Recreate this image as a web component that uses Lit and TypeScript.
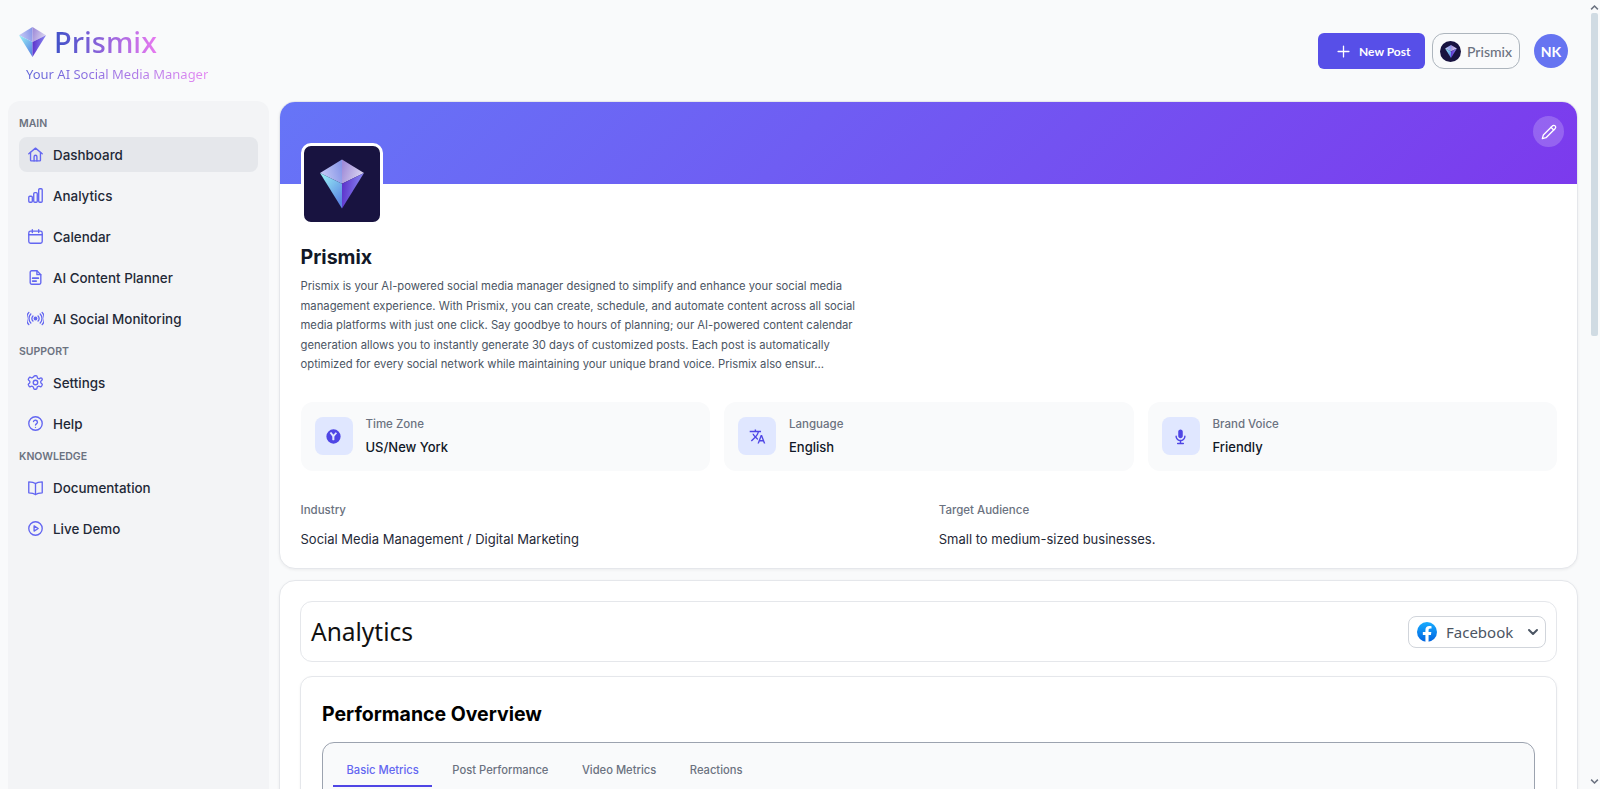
import { LitElement, css, html, svg } from 'lit'
import { customElement } from 'lit/decorators.js'

const gem = (id: string) => html`
  <svg class="gem" viewBox="0 0 129 143" aria-hidden="true">
    <defs>
      <linearGradient id="${id}-tl" x1="0" y1="0.6" x2="1" y2="0.3">
        <stop offset="0" stop-color="#c9ccf6" />
        <stop offset="1" stop-color="#8796e8" />
      </linearGradient>
      <linearGradient id="${id}-tr" x1="0" y1="0.3" x2="1" y2="0.7">
        <stop offset="0" stop-color="#a08cd8" />
        <stop offset="1" stop-color="#dfdbf3" />
      </linearGradient>
      <linearGradient id="${id}-bl" x1="0" y1="0" x2="0.7" y2="1">
        <stop offset="0" stop-color="#9cf7f6" />
        <stop offset="1" stop-color="#5b86e4" />
      </linearGradient>
      <linearGradient id="${id}-br" x1="0" y1="0.2" x2="1" y2="0.4">
        <stop offset="0" stop-color="#5b2fc9" />
        <stop offset="1" stop-color="#8a8cf5" />
      </linearGradient>
    </defs>
    <polygon points="64.5,0 0,39 64.5,71" fill="url(#${id}-tl)" />
    <polygon points="64.5,0 129,39 64.5,71" fill="url(#${id}-tr)" />
    <polygon points="0,39 64.5,71 64.5,143" fill="url(#${id}-bl)" />
    <polygon points="129,39 64.5,71 64.5,143" fill="url(#${id}-br)" />
  </svg>
`

const line = (body: ReturnType<typeof svg>) => html`
  <svg class="ico" viewBox="0 0 24 24" fill="none" stroke="currentColor" stroke-width="1.9" stroke-linecap="round" stroke-linejoin="round" aria-hidden="true">${body}</svg>
`

const navIcons: Record<string, ReturnType<typeof line>> = {
  home: line(svg`<path d="M2.500 11 12 3l9.500 8" /><path d="M5 9v11a1 1 0 0 0 1 1h12a1 1 0 0 0 1-1V9" /><path d="M10 21v-6a2 2 0 0 1 4 0v6" />`),
  chart: line(svg`<rect x="2.500" y="13" width="5" height="8.500" rx="1.500" /><rect x="9.500" y="8" width="5" height="13.500" rx="1.500" /><rect x="16.500" y="2.500" width="5" height="19" rx="1.500" />`),
  calendar: line(svg`<rect x="2.500" y="4.500" width="19" height="17" rx="2.500" /><path d="M2.500 9.500h19" /><path d="M7.500 2.500v4" /><path d="M16.500 2.500v4" />`),
  doc: line(svg`<path d="M14 2.500H6.500a2 2 0 0 0-2 2v15a2 2 0 0 0 2 2h11a2 2 0 0 0 2-2V8Z" /><path d="M14 2.500V8h5.500" /><path d="M8 13h8" stroke-width="2.400" /><path d="M8 17h5" stroke-width="2.400" />`),
  broadcast: line(svg`<circle cx="12" cy="12" r="1.800" fill="currentColor" /><path d="M8.400 8.400a5 5 0 0 0 0 7.200" /><path d="M15.600 8.400a5 5 0 0 1 0 7.200" /><path d="M5.400 5.600a9.200 9.200 0 0 0 0 12.800" /><path d="M18.600 5.600a9.200 9.200 0 0 1 0 12.800" /><path d="M2.600 3.400a13 13 0 0 0 0 17.200" /><path d="M21.400 3.400a13 13 0 0 1 0 17.200" />`),
  cog: line(svg`<path d="M9.600 3.900c.1-.8.8-1.400 1.600-1.400h1.600c.8 0 1.500.6 1.600 1.400l.2 1.200c.1.500.5 1 1 1.200l.7.3c.5.2 1 .2 1.500-.1l1-.7c.7-.4 1.500-.3 2.100.3l.4.6c.4.7.3 1.600-.3 2.100l-1 .8c-.4.3-.6.8-.6 1.300v.8c0 .5.2 1 .6 1.300l1 .8c.6.5.7 1.400.3 2.100l-.8 1.300c-.4.7-1.300.9-2 .6l-1.100-.5c-.5-.2-1-.2-1.500.1l-.7.3c-.5.3-.8.7-.9 1.200l-.2 1.200c-.1.8-.8 1.400-1.600 1.400h-1.600c-.8 0-1.500-.6-1.600-1.400l-.2-1.200c-.1-.5-.4-1-.9-1.200l-.7-.3c-.5-.3-1-.3-1.500-.1l-1.100.5c-.7.3-1.600.1-2-.6l-.8-1.300c-.4-.7-.3-1.600.3-2.100l1-.8c.4-.3.6-.8.6-1.300v-.8c0-.5-.2-1-.6-1.300l-1-.8c-.6-.5-.7-1.400-.3-2.100l.8-1.300c.4-.7 1.300-.9 2-.6l1.100.5c.5.2 1 .2 1.500-.1l.7-.3c.5-.2.9-.7 1-1.200Z" /><circle cx="12" cy="12" r="3.200" />`),
  help: line(svg`<circle cx="12" cy="12" r="9.500" /><path d="M9.200 9.200a2.900 2.900 0 0 1 5.600 1c0 1.900-2.800 2.600-2.800 4" /><path d="M12 17.400h.01" />`),
  book: line(svg`<path d="M12 6.500C10 4.800 6.500 4 2.500 4v15.500c4 0 7.500.8 9.500 2.500 2-1.700 5.500-2.500 9.500-2.500V4c-4 0-7.500.8-9.500 2.500Z" /><path d="M12 6.500V22" />`),
  play: line(svg`<circle cx="12" cy="12" r="9.500" /><path d="M10 8.300v7.400l5.800-3.700Z" />`),
}

const fill = (body: ReturnType<typeof svg>) => html`
  <svg class="ico-solid" viewBox="0 0 24 24" fill="currentColor" aria-hidden="true">${body}</svg>
`

const infoIcons: Record<string, ReturnType<typeof fill>> = {
  globe: fill(svg`<path fill-rule="evenodd" transform="translate(12 12) scale(1.120) translate(-12 -12)" d="M12 3a9 9 0 1 1 0 18 9 9 0 0 1 0-18Zm-4.800 4.700 2.600 3.400c.4.500.7 1 .7 1.700v3.700c.9.300 1.900.300 2.600 0v-3.700c0-.7.300-1.200.7-1.700l2.700-3.300a7 7 0 0 0-1.800-1.300l-2.200 2.700c-.3.300-.7.300-1 0L9.100 6.300a7 7 0 0 0-1.900 1.400Z" />`),
  translate: fill(svg`<path d="M12.870 15.070l-2.540-2.510.03-.03c1.740-1.940 2.980-4.170 3.710-6.530H17V4h-7V2H8v2H1v1.990h11.170C11.500 7.920 10.440 9.750 9 11.350 8.070 10.320 7.300 9.190 6.690 8h-2c.73 1.630 1.730 3.170 2.980 4.560l-5.090 5.020L4 19l5-5 3.110 3.110.76-2.040zM18.500 10h-2L12 22h2l1.120-3h4.750L21 22h2l-4.500-12zm-2.620 7l1.620-4.330L19.120 17h-3.240z" />`),
  mic: fill(svg`<path d="M12 14.500c1.800 0 3.200-1.400 3.200-3.200V5.200C15.200 3.400 13.800 2 12 2S8.800 3.400 8.800 5.200v6.100c0 1.800 1.400 3.200 3.200 3.200Z" /><path d="M18.200 10.500a1 1 0 0 0-1 1c0 2.900-2.300 5.200-5.200 5.200s-5.200-2.300-5.200-5.200a1 1 0 1 0-2 0c0 3.600 2.700 6.600 6.200 7.100V20.800H8a1 1 0 1 0 0 2h8a1 1 0 1 0 0-2h-3v-2.200c3.500-.5 6.200-3.500 6.200-7.100a1 1 0 0 0-1-1Z" />`),
}

const navGroups = [
  {
    title: 'MAIN',
    items: [
      { icon: 'home', label: 'Dashboard', active: true },
      { icon: 'chart', label: 'Analytics' },
      { icon: 'calendar', label: 'Calendar' },
      { icon: 'doc', label: 'AI Content Planner' },
      { icon: 'broadcast', label: 'AI Social Monitoring' },
    ],
  },
  {
    title: 'SUPPORT',
    items: [
      { icon: 'cog', label: 'Settings' },
      { icon: 'help', label: 'Help' },
    ],
  },
  {
    title: 'KNOWLEDGE',
    items: [
      { icon: 'book', label: 'Documentation' },
      { icon: 'play', label: 'Live Demo' },
    ],
  },
]

const infoCards = [
  { icon: 'globe', label: 'Time Zone', value: 'US/New York' },
  { icon: 'translate', label: 'Language', value: 'English' },
  { icon: 'mic', label: 'Brand Voice', value: 'Friendly' },
]

const tabs = ['Basic Metrics', 'Post Performance', 'Video Metrics', 'Reactions']

const bio =
  'Prismix is your AI-powered social media manager designed to simplify and enhance your social media management experience. With Prismix, you can create, schedule, and automate content across all social media platforms with just one click. Say goodbye to hours of planning; our AI-powered content calendar generation allows you to instantly generate 30 days of customized posts. Each post is automatically optimized for every social network while maintaining your unique brand voice. Prismix also ensur...'

@customElement('app-root')
export class AppRoot extends LitElement {
  static styles = css`
    :host {
      display: flex;
      height: 100vh;
      overflow: hidden;
      background: #f9fafb;
      color: #111827;
      font-family: Inter, 'Liberation Sans', sans-serif;
    }
    .page {
      flex: 1;
      min-width: 0;
      display: flex;
      flex-direction: column;
    }
    header {
      height: 101px;
      flex: none;
      display: flex;
      justify-content: space-between;
      align-items: flex-start;
      padding: 0 20px 0 19px;
      box-sizing: border-box;
    }
    .brand {
      padding-top: 25px;
      font-family: 'Noto Sans', sans-serif;
    }
    .brand-row {
      display: flex;
      align-items: center;
      gap: 8px;
    }
    .brand .gem {
      width: 27px;
      height: 30px;
    }
    .brand-name {
      font-size: 29px;
      line-height: 34px;
      font-weight: 500;
      background: linear-gradient(90deg, #3f51c8, #e879f0);
      -webkit-background-clip: text;
      background-clip: text;
      color: transparent;
    }
    .tagline {
      margin: 6px 0 0 7px;
      font-size: 13px;
      line-height: 18px;
      background: linear-gradient(90deg, #5f63d8, #e58af2);
      -webkit-background-clip: text;
      background-clip: text;
      color: transparent;
    }
    .actions {
      display: flex;
      align-items: center;
      padding-top: 33px;
      font-family: Lato, sans-serif;
    }
    .new-post {
      width: 107px;
      height: 36px;
      box-sizing: border-box;
      display: flex;
      align-items: center;
      gap: 9px;
      padding-left: 19px;
      border-radius: 6px;
      background: #574fe8;
      color: #fff;
      font-size: 12px;
      font-weight: 700;
    }
    .new-post svg {
      width: 13px;
      height: 13px;
    }
    .account {
      margin-left: 7px;
      width: 88px;
      height: 36px;
      box-sizing: border-box;
      display: flex;
      align-items: center;
      gap: 6px;
      padding-left: 7px;
      border: 1px solid #adb5bd;
      border-radius: 12px;
      background: #f9fafb;
      color: #6b7280;
      font-size: 14px;
      font-weight: 500;
    }
    .account-logo {
      width: 21px;
      height: 21px;
      border-radius: 50%;
      background: #181340;
      display: flex;
      align-items: center;
      justify-content: center;
    }
    .account-logo .gem {
      width: 12px;
      height: 13px;
    }
    .avatar {
      margin-left: 14px;
      width: 34px;
      height: 34px;
      border-radius: 50%;
      background: #6674f1;
      color: #fff;
      display: flex;
      align-items: center;
      justify-content: center;
      font-size: 14px;
      font-weight: 700;
    }
    .body {
      flex: 1;
      min-height: 0;
      display: flex;
      gap: 10px;
      padding: 0 10px 0 8px;
    }
    aside {
      width: 261px;
      flex: none;
      box-sizing: border-box;
      padding: 16px 11px 0;
      background: #f3f4f6;
      border-radius: 12px 12px 0 0;
    }
    .group-title {
      font-size: 10.500px;
      line-height: 13px;
      font-weight: 600;
      color: #6b7280;
      margin-bottom: 7px;
    }
    .nav-list {
      display: flex;
      flex-direction: column;
      gap: 6px;
      margin-bottom: 9px;
    }
    .nav-item {
      height: 35px;
      display: flex;
      align-items: center;
      gap: 9px;
      padding-left: 8px;
      border-radius: 8px;
      font-size: 13.400px;
      font-weight: 500;
      color: #1f2937;
    }
    .nav-item.active {
      background: #e5e7eb;
    }
    .nav-item .ico {
      width: 17px;
      height: 17px;
      color: #6366f1;
      flex: none;
    }
    main {
      flex: 1;
      min-width: 0;
      display: flex;
      flex-direction: column;
      gap: 11px;
    }
    .card {
      flex: none;
      background: #fff;
      border: 1px solid #e5e7eb;
      border-radius: 16px;
      box-shadow: 0 1px 3px rgba(0, 0, 0, 0.06);
    }
    .profile {
      height: 468px;
      box-sizing: border-box;
      overflow: hidden;
    }
    .banner {
      height: 82px;
      display: flex;
      justify-content: flex-end;
      align-items: flex-start;
      padding: 14px 13px 0 0;
      box-sizing: border-box;
      background: linear-gradient(135deg, #6675f7, #7c3aed);
    }
    .edit {
      width: 31px;
      height: 31px;
      border-radius: 50%;
      background: rgba(255, 255, 255, 0.2);
      color: #fff;
      display: flex;
      align-items: center;
      justify-content: center;
    }
    .edit svg {
      width: 16px;
      height: 16px;
    }
    .profile-body {
      padding: 0 20px 0 20.500px;
    }
    .profile-logo {
      width: 82px;
      height: 82px;
      box-sizing: border-box;
      margin-top: -41px;
      border: 3px solid #fff;
      border-radius: 10px;
      background: #181340;
      display: flex;
      align-items: center;
      justify-content: center;
    }
    .profile-logo .gem {
      width: 44px;
      height: 50px;
    }
    h2 {
      margin: 19px 0 0;
      font-size: 19.600px;
      line-height: 26px;
      font-weight: 700;
      color: #111827;
    }
    .bio {
      margin: 7px 0 0;
      width: 560px;
      font-size: 11.250px;
      line-height: 19.500px;
      color: #4b5563;
    }
    .info-grid {
      margin-top: 27px;
      display: grid;
      grid-template-columns: repeat(3, 1fr);
      gap: 14px;
    }
    .info {
      height: 69px;
      box-sizing: border-box;
      display: flex;
      align-items: center;
      gap: 13px;
      padding: 0 14px;
      background: #f9fafb;
      border-radius: 12px;
    }
    .info-icon {
      width: 38px;
      height: 38px;
      flex: none;
      border-radius: 8px;
      background: #e0e7ff;
      color: #4f46e5;
      display: flex;
      align-items: center;
      justify-content: center;
    }
    .ico-solid {
      width: 17px;
      height: 17px;
    }
    .info-label {
      font-size: 11.500px;
      line-height: 16px;
      font-weight: 500;
      color: #6b7280;
    }
    .info-value {
      margin-top: 6px;
      font-size: 13px;
      line-height: 18px;
      font-weight: 500;
      color: #111827;
    }
    .facts {
      margin-top: 31px;
      display: grid;
      grid-template-columns: 1fr 1fr;
      gap: 20px;
    }
    .fact-label {
      font-size: 11.500px;
      line-height: 16px;
      font-weight: 500;
      color: #6b7280;
    }
    .fact-value {
      margin-top: 12px;
      font-size: 13px;
      line-height: 18px;
      color: #1f2937;
    }
    .analytics {
      padding: 20px 20px 0;
      border-radius: 16px 16px 0 0;
    }
    .analytics-head {
      height: 61px;
      box-sizing: border-box;
      display: flex;
      align-items: center;
      justify-content: space-between;
      padding: 0 10px;
      border: 1px solid #e5e7eb;
      border-radius: 12px;
    }
    .analytics-head h3 {
      margin: 0;
      font-family: 'Noto Sans', sans-serif;
      font-size: 24.500px;
      font-weight: 400;
      color: #111;
    }
    .select {
      width: 138px;
      height: 32px;
      box-sizing: border-box;
      display: flex;
      align-items: center;
      gap: 9px;
      padding-left: 8px;
      border: 1px solid #d1d5db;
      border-radius: 8px;
      font-family: 'Noto Sans', sans-serif;
      font-size: 15px;
      color: #4b5563;
    }
    .select .fb {
      width: 20px;
      height: 20px;
      flex: none;
    }
    .select .chev {
      width: 12px;
      height: 12px;
      margin-left: auto;
      margin-right: 6px;
    }
    .overview {
      margin-top: 14px;
      padding: 0 21px;
      height: 600px;
      border: 1px solid #e5e7eb;
      border-radius: 12px;
      box-shadow: 0 1px 3px rgba(0, 0, 0, 0.05);
    }
    .overview h3 {
      margin: 24px 0 0;
      font-size: 19.500px;
      line-height: 26px;
      font-weight: 700;
      color: #000;
    }
    .tabs-box {
      margin-top: 15px;
      height: 300px;
      padding: 0 10px;
      border: 1px solid #9ca3af;
      border-radius: 12px;
      background: #f9fafb;
    }
    .tabs {
      display: flex;
      gap: 6.500px;
    }
    .tab {
      height: 44px;
      box-sizing: border-box;
      display: flex;
      align-items: center;
      padding: 11px 13.500px 0;
      font-size: 11.200px;
      font-weight: 500;
      color: #6b7280;
      border-bottom: 2px solid transparent;
    }
    .tab.active {
      color: #6366f1;
      border-bottom-color: #4f46e5;
    }
    /* painted bar, the screenshot browser hides the native one */
    .scrollbar {
      width: 12px;
      flex: none;
      display: flex;
      flex-direction: column;
      align-items: center;
      background: #f9fafb;
    }
    .scrollbar svg {
      width: 9px;
      height: 9px;
      flex: none;
      color: #6b7280;
    }
    .bar-top {
      margin-top: 3px;
    }
    .thumb {
      width: 7px;
      height: 323px;
      margin: 1px 0 0 1px;
      background: #d0dbe3;
      border-radius: 2px;
    }
    .bar-down {
      margin-top: auto;
      margin-bottom: 3px;
    }
  `

  render() {
    return html`
      <div class="page">
        <header>
          <div class="brand">
            <div class="brand-row">${gem('head')}<span class="brand-name">Prismix</span></div>
            <div class="tagline">Your AI Social Media Manager</div>
          </div>
          <div class="actions">
            <div class="new-post">
              <svg viewBox="0 0 24 24" fill="none" stroke="currentColor" stroke-width="2.400" stroke-linecap="round"><path d="M12 2v20M2 12h20" /></svg>
              New Post
            </div>
            <div class="account"><span class="account-logo">${gem('acct')}</span>Prismix</div>
            <div class="avatar">NK</div>
          </div>
        </header>
        <div class="body">
          <aside>
            ${navGroups.map(
              (g) => html`
                <div class="group-title">${g.title}</div>
                <div class="nav-list">
                  ${g.items.map(
                    (it) => html`
                      <div class="nav-item ${'active' in it && it.active ? 'active' : ''}">
                        ${navIcons[it.icon]}<span>${it.label}</span>
                      </div>
                    `,
                  )}
                </div>
              `,
            )}
          </aside>
          <main>
            <section class="card profile">
              <div class="banner">
                <div class="edit">
                  <svg viewBox="0 0 24 24" fill="none" stroke="currentColor" stroke-width="2" stroke-linecap="round" stroke-linejoin="round"><path d="M17 3a2.850 2.830 0 1 1 4 4L7.500 20.500 2 22l1.500-5.500Z" /><path d="m15 5 4 4" /></svg>
                </div>
              </div>
              <div class="profile-body">
                <div class="profile-logo">${gem('card')}</div>
                <h2>Prismix</h2>
                <p class="bio">${bio}</p>
                <div class="info-grid">
                  ${infoCards.map(
                    (c) => html`
                      <div class="info">
                        <div class="info-icon">${infoIcons[c.icon]}</div>
                        <div>
                          <div class="info-label">${c.label}</div>
                          <div class="info-value">${c.value}</div>
                        </div>
                      </div>
                    `,
                  )}
                </div>
                <div class="facts">
                  <div>
                    <div class="fact-label">Industry</div>
                    <div class="fact-value">Social Media Management / Digital Marketing</div>
                  </div>
                  <div>
                    <div class="fact-label">Target Audience</div>
                    <div class="fact-value">Small to medium-sized businesses.</div>
                  </div>
                </div>
              </div>
            </section>
            <section class="card analytics">
              <div class="analytics-head">
                <h3>Analytics</h3>
                <div class="select">
                  <svg class="fb" viewBox="0 0 24 24">
                    <defs>
                      <linearGradient id="fb-grad" x1="0" y1="0" x2="0" y2="1">
                        <stop offset="0" stop-color="#18acfe" />
                        <stop offset="1" stop-color="#0163e0" />
                      </linearGradient>
                    </defs>
                    <circle cx="12" cy="12" r="12" fill="url(#fb-grad)" />
                    <path fill="#fff" d="M16.700 15.500l.5-3.500h-3.300V9.800c0-1 .5-1.900 2-1.900h1.500V5c-.9-.1-1.800-.2-2.700-.2-2.800 0-4.600 1.700-4.600 4.700V12H7v3.500h3.100V24c.6.100 1.300.1 1.900.1s1.300 0 1.900-.1v-8.500Z" />
                  </svg>
                  Facebook
                  <svg class="chev" viewBox="0 0 24 24" fill="none" stroke="currentColor" stroke-width="4" stroke-linecap="round" stroke-linejoin="round"><path d="m4 8 8 8 8-8" /></svg>
                </div>
              </div>
              <div class="overview">
                <h3>Performance Overview</h3>
                <div class="tabs-box">
                  <div class="tabs">
                    ${tabs.map((t, i) => html`<div class="tab ${i === 0 ? 'active' : ''}">${t}</div>`)}
                  </div>
                </div>
              </div>
            </section>
          </main>
        </div>
      </div>
      <div class="scrollbar">
        <svg class="bar-top" viewBox="0 0 24 24" fill="none" stroke="currentColor" stroke-width="4"><path d="m3 17 9-9 9 9" /></svg>
        <div class="thumb"></div>
        <svg class="bar-down" viewBox="0 0 24 24" fill="none" stroke="currentColor" stroke-width="4"><path d="m3 7 9 9 9-9" /></svg>
      </div>
    `
  }
}

declare global {
  interface HTMLElementTagNameMap {
    'app-root': AppRoot
  }
}
